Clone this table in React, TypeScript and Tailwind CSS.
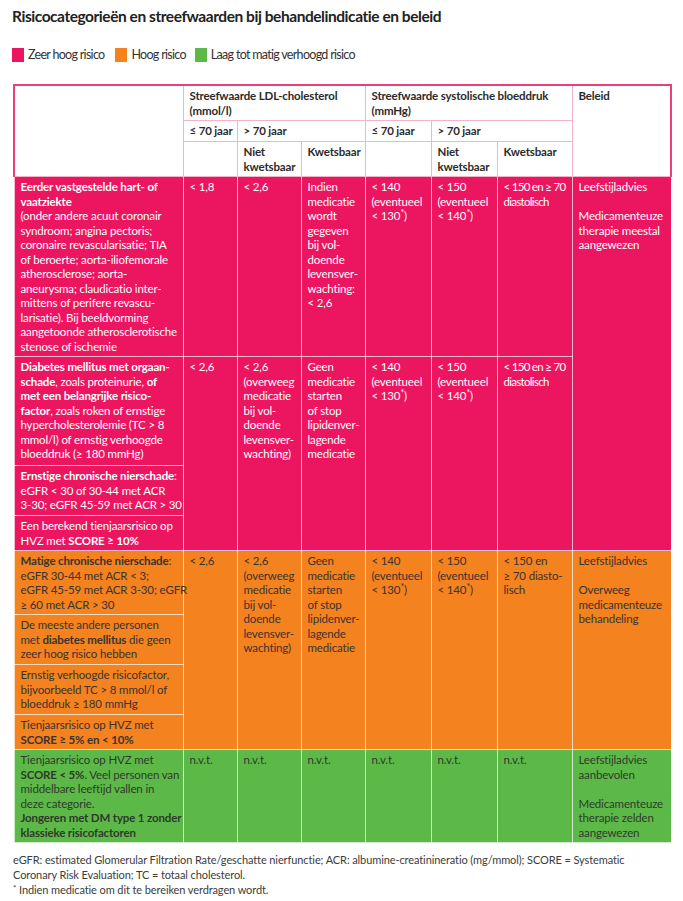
const pinkCell = "bg-[#ec155f] text-white border border-white/70 align-top px-[6px] pt-[3px] pb-[2px]";
const orangeCell = "bg-[#f3821f] text-[#3a3330] border border-white/70 align-top px-[6px] pt-[3px] pb-[2px]";
const greenCell = "bg-[#5cb947] text-[#2f3a2c] border border-white/70 align-top px-[6px] pt-[3px] pb-[2px]";
const headCell = "bg-white text-[#2b2b2b] font-bold text-left align-top whitespace-nowrap border border-[#f5b3c9] px-[6px] pt-[3px] pb-[2px]";

const Star = () => <span className="relative -top-[4px] text-[9px] leading-none">*</span>;

const App = () => {
  return (
    <div className="min-h-screen bg-white px-[12px] pt-[6px] font-['Lato',sans-serif] text-[11.5px] tracking-[-0.15px] leading-[14.5px]">
      {/* Title */}
      <h1 className="text-[15.5px] leading-[20px] font-bold tracking-[-0.45px] text-[#222]">
        Risicocategorieën en streefwaarden bij behandelindicatie en beleid
      </h1>

      {/* Legend */}
      <div className="mt-[21px] flex items-center h-[16px] text-[12.5px] tracking-[-0.7px] text-[#333]">
        <span className="w-[12px] h-[14px] bg-[#ec155f]"></span>
        <span className="ml-[4px]">Zeer hoog risico</span>
        <span className="ml-[11px] w-[12px] h-[14px] bg-[#f3821f]"></span>
        <span className="ml-[4px]">Hoog risico</span>
        <span className="ml-[9px] w-[12px] h-[14px] bg-[#5cb947]"></span>
        <span className="ml-[4px]">Laag tot matig verhoogd risico</span>
      </div>

      {/* Table */}
      <table className="mt-[21px] ml-[1px] w-[657px] table-fixed border-collapse">
        <colgroup>
          <col className="w-[169px]" />
          <col className="w-[54px]" />
          <col className="w-[64px]" />
          <col className="w-[64px]" />
          <col className="w-[66px]" />
          <col className="w-[66px]" />
          <col className="w-[75px]" />
          <col className="w-[99px]" />
        </colgroup>
        <thead>
          <tr className="h-[34px]">
            <th rowSpan={3} className={`${headCell} border-l-2 border-t-2 border-l-[#ec3d7c] border-t-[#ec3d7c]`}></th>
            <th colSpan={3} className={`${headCell} border-t-2 border-t-[#ec3d7c]`}>
              Streefwaarde LDL-cholesterol
              <br />
              (mmol/l)
            </th>
            <th colSpan={3} className={`${headCell} border-t-2 border-t-[#ec3d7c]`}>
              Streefwaarde systolische bloeddruk
              <br />
              (mmHg)
            </th>
            <th rowSpan={3} className={`${headCell} border-r-2 border-t-2 border-r-[#ec3d7c] border-t-[#ec3d7c]`}>
              Beleid
            </th>
          </tr>
          <tr className="h-[21px]">
            <th className={headCell}>≤ 70 jaar</th>
            <th colSpan={2} className={headCell}>{"> 70 jaar"}</th>
            <th className={headCell}>≤ 70 jaar</th>
            <th colSpan={2} className={headCell}>{"> 70 jaar"}</th>
          </tr>
          <tr className="h-[35px]">
            <th className={headCell}></th>
            <th className={headCell}>
              Niet
              <br />
              kwetsbaar
            </th>
            <th className={headCell}>Kwetsbaar</th>
            <th className={headCell}></th>
            <th className={headCell}>
              Niet
              <br />
              kwetsbaar
            </th>
            <th className={headCell}>Kwetsbaar</th>
          </tr>
        </thead>
        <tbody className="whitespace-nowrap">
          {/* Zeer hoog risico */}
          <tr className="h-[179px]">
            <td className={pinkCell}>
              <b>
                Eerder vastgestelde hart- of
                <br />
                vaatziekte
              </b>
              <br />
              (onder andere acuut coronair
              <br />
              syndroom; angina pectoris;
              <br />
              coronaire revascularisatie; TIA
              <br />
              of beroerte; aorta-iliofemorale
              <br />
              atherosclerose; aorta-
              <br />
              aneurysma; claudicatio inter-
              <br />
              mittens of perifere revascu-
              <br />
              larisatie). Bij beeldvorming
              <br />
              aangetoonde atherosclerotische
              <br />
              stenose of ischemie
            </td>
            <td className={pinkCell}>{"< 1,8"}</td>
            <td className={pinkCell}>{"< 2,6"}</td>
            <td className={pinkCell}>
              Indien
              <br />
              medicatie
              <br />
              wordt
              <br />
              gegeven
              <br />
              bij vol-
              <br />
              doende
              <br />
              levensver-
              <br />
              wachting:
              <br />
              {"< 2,6"}
            </td>
            <td className={pinkCell}>
              {"< 140"}
              <br />
              (eventueel
              <br />
              {"< 130"}
              <Star />)
            </td>
            <td className={pinkCell}>
              {"< 150"}
              <br />
              (eventueel
              <br />
              {"< 140"}
              <Star />)
            </td>
            <td className={`${pinkCell} tracking-[-0.7px]`}>
              {"< 150 en ≥ 70"}
              <br />
              diastolisch
            </td>
            <td rowSpan={4} className={pinkCell}>
              Leefstijladvies
              <br />
              <br />
              Medicamenteuze
              <br />
              therapie meestal
              <br />
              aangewezen
            </td>
          </tr>
          <tr className="h-[109px]">
            <td className={pinkCell}>
              <b>
                Diabetes mellitus met orgaan-
                <br />
                schade
              </b>
              , zoals proteinurie, <b>of</b>
              <br />
              <b>
                met een belangrijke risico-
                <br />
                factor
              </b>
              , zoals roken of ernstige
              <br />
              {"hypercholesterolemie (TC > 8"}
              <br />
              mmol/l) of ernstig verhoogde
              <br />
              bloeddruk (≥ 180 mmHg)
            </td>
            <td rowSpan={3} className={pinkCell}>{"< 2,6"}</td>
            <td rowSpan={3} className={pinkCell}>
              {"< 2,6"}
              <br />
              (overweeg
              <br />
              medicatie
              <br />
              bij vol-
              <br />
              doende
              <br />
              levensver-
              <br />
              wachting)
            </td>
            <td rowSpan={3} className={pinkCell}>
              Geen
              <br />
              medicatie
              <br />
              starten
              <br />
              of stop
              <br />
              lipidenver-
              <br />
              lagende
              <br />
              medicatie
            </td>
            <td rowSpan={3} className={pinkCell}>
              {"< 140"}
              <br />
              (eventueel
              <br />
              {"< 130"}
              <Star />)
            </td>
            <td rowSpan={3} className={pinkCell}>
              {"< 150"}
              <br />
              (eventueel
              <br />
              {"< 140"}
              <Star />)
            </td>
            <td rowSpan={3} className={`${pinkCell} tracking-[-0.7px]`}>
              {"< 150 en ≥ 70"}
              <br />
              diastolisch
            </td>
          </tr>
          <tr className="h-[50px]">
            <td className={pinkCell}>
              <b>Ernstige chronische nierschade</b>:
              <br />
              {"eGFR < 30 of 30-44 met ACR"}
              <br />
              {"3-30; eGFR 45-59 met ACR > 30"}
            </td>
          </tr>
          <tr className="h-[35px]">
            <td className={pinkCell}>
              Een berekend tienjaarsrisico op
              <br />
              HVZ met <b>SCORE ≥ 10%</b>
            </td>
          </tr>

          {/* Hoog risico */}
          <tr className="h-[64px]">
            <td className={orangeCell}>
              <b>Matige chronische nierschade</b>:
              <br />
              {"eGFR 30-44 met ACR < 3;"}
              <br />
              eGFR 45-59 met ACR 3-30; eGFR
              <br />
              {"≥ 60 met ACR > 30"}
            </td>
            <td rowSpan={4} className={orangeCell}>{"< 2,6"}</td>
            <td rowSpan={4} className={orangeCell}>
              {"< 2,6"}
              <br />
              (overweeg
              <br />
              medicatie
              <br />
              bij vol-
              <br />
              doende
              <br />
              levensver-
              <br />
              wachting)
            </td>
            <td rowSpan={4} className={orangeCell}>
              Geen
              <br />
              medicatie
              <br />
              starten
              <br />
              of stop
              <br />
              lipidenver-
              <br />
              lagende
              <br />
              medicatie
            </td>
            <td rowSpan={4} className={orangeCell}>
              {"< 140"}
              <br />
              (eventueel
              <br />
              {"< 130"}
              <Star />)
            </td>
            <td rowSpan={4} className={orangeCell}>
              {"< 150"}
              <br />
              (eventueel
              <br />
              {"< 140"}
              <Star />)
            </td>
            <td rowSpan={4} className={orangeCell}>
              {"< 150 en"}
              <br />
              ≥ 70 diasto-
              <br />
              lisch
            </td>
            <td rowSpan={4} className={orangeCell}>
              Leefstijladvies
              <br />
              <br />
              Overweeg
              <br />
              medicamenteuze
              <br />
              behandeling
            </td>
          </tr>
          <tr className="h-[50px]">
            <td className={orangeCell}>
              De meeste andere personen
              <br />
              met <b>diabetes mellitus</b> die geen
              <br />
              zeer hoog risico hebben
            </td>
          </tr>
          <tr className="h-[50px]">
            <td className={orangeCell}>
              Ernstig verhoogde risicofactor,
              <br />
              {"bijvoorbeeld TC > 8 mmol/l of"}
              <br />
              bloeddruk ≥ 180 mmHg
            </td>
          </tr>
          <tr className="h-[35px]">
            <td className={orangeCell}>
              Tienjaarsrisico op HVZ met
              <br />
              <b>{"SCORE ≥ 5% en < 10%"}</b>
            </td>
          </tr>

          {/* Laag tot matig verhoogd risico */}
          <tr className="h-[92px]">
            <td className={greenCell}>
              Tienjaarsrisico op HVZ met
              <br />
              <b>{"SCORE < 5%"}</b>. Veel personen van
              <br />
              middelbare leeftijd vallen in
              <br />
              deze categorie.
              <br />
              <b>
                Jongeren met DM type 1 zonder
                <br />
                klassieke risicofactoren
              </b>
            </td>
            <td className={greenCell}>n.v.t.</td>
            <td className={greenCell}>n.v.t.</td>
            <td className={greenCell}>n.v.t.</td>
            <td className={greenCell}>n.v.t.</td>
            <td className={greenCell}>n.v.t.</td>
            <td className={greenCell}>n.v.t.</td>
            <td className={greenCell}>
              Leefstijladvies
              <br />
              aanbevolen
              <br />
              <br />
              Medicamenteuze
              <br />
              therapie zelden
              <br />
              aangewezen
            </td>
          </tr>
        </tbody>
      </table>

      {/* Footnotes */}
      <div className="mt-[9px] ml-[1px] text-[11px] tracking-[-0.1px] leading-[15px] text-[#3c3c3c] whitespace-nowrap">
        <p>
          eGFR: estimated Glomerular Filtration Rate/geschatte nierfunctie; ACR: albumine-creatinineratio (mg/mmol); SCORE = Systematic
          <br />
          Coronary Risk Evaluation; TC = totaal cholesterol.
        </p>
        <p>
          <span className="relative -top-[3px] text-[8px]">*</span> Indien medicatie om dit te bereiken verdragen wordt.
        </p>
      </div>
    </div>
  );
};

export default App;
